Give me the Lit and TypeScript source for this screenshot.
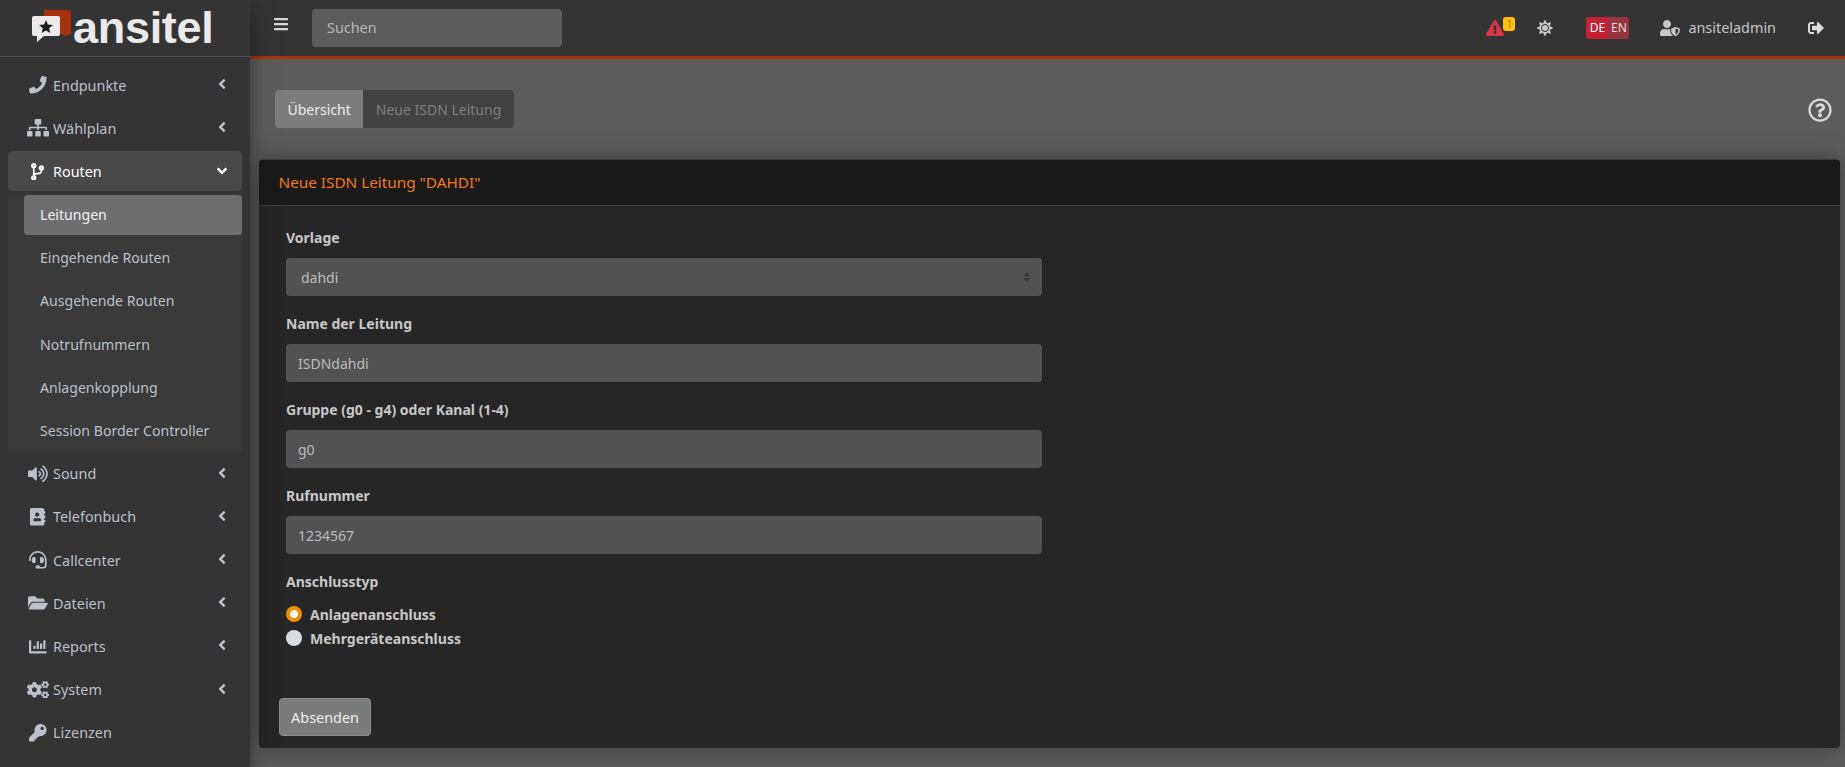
import { LitElement, html, css, svg } from "lit";
import { customElement } from "lit/decorators.js";

const P: Record<string, [number, string]> = {
  phone: [512, "M493.4 24.6l-104-24c-11.3-2.6-22.9 3.3-27.5 13.9l-48 112c-4.2 9.8-1.4 21.3 6.9 28l60.6 49.6c-36 76.7-98.9 140.5-177.2 177.2l-49.6-60.6c-6.8-8.3-18.2-11.1-28-6.9l-112 48C3.9 366.5-2 378.1.6 389.4l24 104C27.1 504.2 36.7 512 48 512c256.1 0 464-207.5 464-464 0-11.2-7.7-20.9-18.6-23.4z"],
  sitemap: [640, "M128 352H32c-17.67 0-32 14.33-32 32v96c0 17.67 14.33 32 32 32h96c17.67 0 32-14.33 32-32v-96c0-17.67-14.33-32-32-32zm-24-80h192v48h48v-48h192v48h48v-57.59c0-21.17-17.23-38.41-38.41-38.41H344v-64h40c17.67 0 32-14.33 32-32V32c0-17.67-14.33-32-32-32H256c-17.67 0-32 14.33-32 32v96c0 17.67 14.33 32 32 32h40v64H94.41C73.23 224 56 241.23 56 262.41V320h48v-48zm264 80h-96c-17.67 0-32 14.33-32 32v96c0 17.67 14.33 32 32 32h96c17.67 0 32-14.33 32-32v-96c0-17.67-14.33-32-32-32zm240 0h-96c-17.67 0-32 14.33-32 32v96c0 17.67 14.33 32 32 32h96c17.67 0 32-14.33 32-32v-96c0-17.67-14.33-32-32-32z"],
  branch: [384, "M384 144c0-44.2-35.8-80-80-80s-80 35.8-80 80c0 36.4 24.3 67.1 57.5 76.8-.6 16.1-4.2 28.5-11 36.9-15.4 19.2-49.3 22.4-85.2 25.7-28.2 2.6-57.4 5.4-81.3 16.9v-144c32.5-10.2 56-40.5 56-76.3 0-44.2-35.8-80-80-80S0 35.8 0 80c0 35.8 23.5 66.1 56 76.3v199.3C23.5 365.9 0 396.2 0 432c0 44.2 35.8 80 80 80s80-35.8 80-80c0-34-21.2-63.1-51.2-74.6 3.1-5.2 7.8-9.8 14.9-13.4 16.2-8.2 40.4-10.4 66.1-12.8 42.2-3.9 90-8.4 118.2-43.4 14-17.4 21.1-39.8 21.6-67.9 31.6-10.8 54.4-40.7 54.4-75.9zM80 64c8.8 0 16 7.2 16 16s-7.2 16-16 16-16-7.2-16-16 7.2-16 16-16zm0 384c-8.8 0-16-7.2-16-16s7.2-16 16-16 16 7.2 16 16-7.2 16-16 16zm224-320c8.8 0 16 7.2 16 16s-7.2 16-16 16-16-7.2-16-16 7.2-16 16-16z"],
  volume: [576, "M215.03 71.05L126.06 160H24c-13.26 0-24 10.74-24 24v144c0 13.25 10.74 24 24 24h102.06l88.97 88.95c15.03 15.03 40.97 4.47 40.97-16.97V88.02c0-21.46-25.96-31.98-40.97-16.97zm233.32-51.08c-11.17-7.33-26.18-4.24-33.51 6.95-7.34 11.17-4.22 26.18 6.95 33.51 66.27 43.49 105.82 116.6 105.82 195.58 0 78.98-39.55 152.09-105.82 195.58-11.17 7.32-14.29 22.34-6.95 33.5 7.04 10.71 21.93 14.56 33.51 6.95C528.27 439.58 576 351.33 576 256S528.27 72.43 448.35 19.97zM480 256c0-63.53-32.06-121.94-85.77-156.24-11.19-7.14-26.03-3.82-33.12 7.46s-3.78 26.21 7.41 33.36C408.27 165.97 432 209.11 432 256s-23.73 90.03-63.48 115.42c-11.19 7.14-14.5 22.07-7.41 33.36 6.51 10.36 21.12 15.14 33.12 7.46C447.94 377.94 480 319.54 480 256zm-141.77-76.87c-11.58-6.33-26.19-2.16-32.61 9.45-6.39 11.61-2.16 26.2 9.45 32.61C327.98 228.28 336 241.63 336 256c0 14.38-8.02 27.72-20.92 34.81-11.61 6.41-15.84 21-9.45 32.61 6.43 11.66 21.05 15.8 32.61 9.45 28.23-15.55 45.77-45 45.77-76.88s-17.54-61.32-45.78-76.86z"],
  book: [448, "M436 160c6.6 0 12-5.4 12-12v-40c0-6.6-5.4-12-12-12h-20V48c0-26.5-21.5-48-48-48H48C21.5 0 0 21.5 0 48v416c0 26.5 21.5 48 48 48h320c26.5 0 48-21.5 48-48v-48h20c6.6 0 12-5.4 12-12v-40c0-6.6-5.4-12-12-12h-20v-64h20c6.6 0 12-5.4 12-12v-40c0-6.6-5.4-12-12-12h-20v-64h20zm-228-32c35.3 0 64 28.7 64 64s-28.7 64-64 64-64-28.7-64-64 28.7-64 64-64zm112 236.8c0 10.6-10 19.2-22.4 19.2H118.4C106 384 96 375.4 96 364.8v-19.2c0-31.8 30.1-57.6 67.2-57.6h5c12.3 5.1 25.7 8 39.8 8s27.6-2.9 39.8-8h5c37.1 0 67.2 25.8 67.2 57.6v19.2z"],
  headset: [512, "M192 208c0-17.67-14.33-32-32-32h-16c-35.35 0-64 28.65-64 64v48c0 35.35 28.65 64 64 64h16c17.67 0 32-14.33 32-32V208zm176 144c35.35 0 64-28.65 64-64v-48c0-35.35-28.65-64-64-64h-16c-17.67 0-32 14.33-32 32v112c0 17.67 14.33 32 32 32h16zM256 0C113.18 0 4.58 118.83 0 256v16c0 8.84 7.16 16 16 16h16c8.84 0 16-7.16 16-16v-16c0-114.69 93.31-208 208-208s208 93.31 208 208h-.12c.08 2.43.12 165.72.12 165.72 0 23.35-18.93 42.28-42.28 42.28H320c0-26.51-21.49-48-48-48h-32c-26.51 0-48 21.49-48 48s21.49 48 48 48h181.72c49.86 0 90.28-40.42 90.28-90.28V256C507.42 118.83 398.82 0 256 0z"],
  folder: [576, "M572.694 292.093L500.27 416.248A63.997 63.997 0 0 1 444.989 448H45.025c-18.523 0-30.064-20.093-20.731-36.093l72.424-124.155A64 64 0 0 1 152 256h399.964c18.523 0 30.064 20.093 20.73 36.093zM152 224h328v-48c0-26.51-21.49-48-48-48H272l-64-64H48C21.49 64 0 85.49 0 112v278.046l69.077-118.418C86.214 242.25 117.989 224 152 224z"],
  chart: [512, "M332.8 320h38.4c6.4 0 12.8-6.4 12.8-12.8V172.8c0-6.4-6.4-12.8-12.8-12.8h-38.4c-6.4 0-12.8 6.4-12.8 12.8v134.4c0 6.4 6.4 12.8 12.8 12.8zm96 0h38.4c6.4 0 12.8-6.4 12.8-12.8V76.8c0-6.4-6.4-12.8-12.8-12.8h-38.4c-6.4 0-12.8 6.4-12.8 12.8v230.4c0 6.4 6.4 12.8 12.8 12.8zm-288 0h38.4c6.4 0 12.8-6.4 12.8-12.8v-70.4c0-6.4-6.4-12.8-12.8-12.8h-38.4c-6.4 0-12.8 6.4-12.8 12.8v70.4c0 6.4 6.4 12.8 12.8 12.8zm96 0h38.4c6.4 0 12.8-6.4 12.8-12.8V108.8c0-6.4-6.4-12.8-12.8-12.8h-38.4c-6.4 0-12.8 6.4-12.8 12.8v198.4c0 6.4 6.4 12.8 12.8 12.8zM496 384H64V80c0-8.84-7.16-16-16-16H16C7.16 64 0 71.16 0 80v336c0 17.67 14.33 32 32 32h464c8.84 0 16-7.16 16-16v-32c0-8.84-7.16-16-16-16z"],
  cogs: [640, "M512.1 191l-8.2 14.3c-3 5.3-9.4 7.5-15.1 5.4-11.8-4.4-22.6-10.7-32.1-18.6-4.6-3.8-5.8-10.5-2.8-15.7l8.2-14.3c-6.9-8-12.3-17.3-15.9-27.4h-16.5c-6 0-11.2-4.3-12.2-10.3-2-12-2.1-24.6 0-37.1 1-6 6.2-10.4 12.2-10.4h16.5c3.6-10.1 9-19.4 15.9-27.4l-8.2-14.3c-3-5.2-1.9-11.9 2.8-15.7 9.5-7.9 20.4-14.2 32.1-18.6 5.7-2.1 12.1.1 15.1 5.4l8.2 14.3c10.5-1.9 21.2-1.9 31.7 0L552 6.3c3-5.3 9.4-7.5 15.1-5.4 11.8 4.4 22.6 10.7 32.1 18.6 4.6 3.8 5.8 10.5 2.8 15.7l-8.2 14.3c6.9 8 12.3 17.3 15.9 27.4h16.5c6 0 11.2 4.3 12.2 10.3 2 12 2.1 24.6 0 37.1-1 6-6.2 10.4-12.2 10.4h-16.5c-3.6 10.1-9 19.4-15.9 27.4l8.2 14.3c3 5.2 1.9 11.9-2.8 15.7-9.5 7.9-20.4 14.2-32.1 18.6-5.7 2.1-12.1-.1-15.1-5.4l-8.2-14.3c-10.4 1.9-21.2 1.9-31.7 0zm-10.5-58.8c38.5 29.6 82.4-14.3 52.8-52.8-38.5-29.7-82.4 14.3-52.8 52.8zM386.3 286.1l33.7 16.8c10.1 5.8 14.5 18.1 10.5 29.1-8.9 24.2-26.4 46.4-42.6 65.8-7.4 8.9-20.2 11.1-30.3 5.3l-29.1-16.8c-16 13.7-34.6 24.6-54.9 31.7v33.6c0 11.6-8.3 21.6-19.7 23.6-24.6 4.2-50.4 4.4-75.9 0-11.5-2-20-11.9-20-23.6V418c-20.3-7.2-38.9-18-54.9-31.7L74 403c-10 5.8-22.9 3.6-30.3-5.3-16.2-19.4-33.3-41.6-42.2-65.7-4-10.9.4-23.2 10.5-29.1l33.3-16.8c-3.9-20.9-3.9-42.4 0-63.4L12 205.8c-10.1-5.8-14.6-18.1-10.5-29 8.9-24.2 26-46.4 42.2-65.8 7.4-8.9 20.2-11.1 30.3-5.3l29.1 16.8c16-13.7 34.6-24.6 54.9-31.7V57.1c0-11.5 8.2-21.5 19.6-23.5 24.6-4.2 50.5-4.4 76-.1 11.5 2 20 11.9 20 23.6v33.6c20.3 7.2 38.9 18 54.9 31.7l29.1-16.8c10-5.8 22.9-3.6 30.3 5.3 16.2 19.4 33.2 41.6 42.1 65.8 4 10.9.1 23.2-10 29.1l-33.7 16.8c3.9 21 3.9 42.5 0 63.5zm-117.6 21.1c59.2-77-28.7-164.9-105.7-105.7-59.2 77 28.7 164.9 105.7 105.7zm243.4 182.7l-8.2 14.3c-3 5.3-9.4 7.5-15.1 5.4-11.8-4.4-22.6-10.7-32.1-18.6-4.6-3.8-5.8-10.5-2.8-15.7l8.2-14.3c-6.9-8-12.3-17.3-15.9-27.4h-16.5c-6 0-11.2-4.3-12.2-10.3-2-12-2.1-24.6 0-37.1 1-6 6.2-10.4 12.2-10.4h16.5c3.6-10.1 9-19.4 15.9-27.4l-8.2-14.3c-3-5.2-1.9-11.9 2.8-15.7 9.5-7.9 20.4-14.2 32.1-18.6 5.7-2.1 12.1.1 15.1 5.4l8.2 14.3c10.5-1.9 21.2-1.9 31.7 0l8.2-14.3c3-5.3 9.4-7.5 15.1-5.4 11.8 4.4 22.6 10.7 32.1 18.6 4.6 3.8 5.8 10.5 2.8 15.7l-8.2 14.3c6.9 8 12.3 17.3 15.9 27.4h16.5c6 0 11.2 4.3 12.2 10.3 2 12 2.1 24.6 0 37.1-1 6-6.2 10.4-12.2 10.4h-16.5c-3.6 10.1-9 19.4-15.9 27.4l8.2 14.3c3 5.2 1.9 11.9-2.8 15.7-9.5 7.9-20.4 14.2-32.1 18.6-5.7 2.1-12.1-.1-15.1-5.4l-8.2-14.3c-10.4 1.9-21.2 1.9-31.7 0zM501.6 431c38.5 29.6 82.4-14.3 52.8-52.8-38.5-29.6-82.4 14.3-52.8 52.8z"],
  key: [512, "M512 176.001C512 273.203 433.202 352 336 352c-11.22 0-22.19-1.062-32.827-3.069l-24.012 27.014A23.999 23.999 0 0 1 261.223 384H224v40c0 13.255-10.745 24-24 24h-40v40c0 13.255-10.745 24-24 24H24c-13.255 0-24-10.745-24-24v-78.059c0-6.365 2.529-12.47 7.029-16.971l161.802-161.802C163.108 213.814 160 195.271 160 176 160 78.798 238.797.001 335.999 0 433.488-.001 512 78.511 512 176.001zM336 128c0 26.51 21.49 48 48 48s48-21.49 48-48-21.49-48-48-48-48 21.49-48 48z"],
  left: [256, "M31.7 239l136-136c9.4-9.4 24.6-9.4 33.9 0l22.6 22.6c9.4 9.4 9.4 24.6 0 33.9L127.9 256l96.4 96.4c9.4 9.4 9.4 24.6 0 33.9L201.7 409c-9.4 9.4-24.6 9.4-33.9 0l-136-136c-9.5-9.4-9.5-24.6-.1-34z"],
  bars: [448, "M16 132h416c8.837 0 16-7.163 16-16V76c0-8.837-7.163-16-16-16H16C7.163 60 0 67.163 0 76v40c0 8.837 7.163 16 16 16zm0 160h416c8.837 0 16-7.163 16-16v-40c0-8.837-7.163-16-16-16H16c-8.837 0-16 7.163-16 16v40c0 8.837 7.163 16 16 16zm0 160h416c8.837 0 16-7.163 16-16v-40c0-8.837-7.163-16-16-16H16c-8.837 0-16 7.163-16 16v40c0 8.837 7.163 16 16 16z"],
  warn: [576, "M569.517 440.013C587.975 472.007 564.806 512 527.94 512H48.054c-36.937 0-59.999-40.055-41.577-71.987L246.423 24c18.467-32.009 64.72-31.951 83.154 0l239.94 416.013zM288 354c-25.405 0-46 20.595-46 46s20.595 46 46 46 46-20.595 46-46-20.595-46-46-46zm-43.673-165.346l7.418 136c.347 6.364 5.609 11.346 11.982 11.346h48.546c6.373 0 11.635-4.982 11.982-11.346l7.418-136c.375-6.874-5.098-12.654-11.982-12.654h-63.383c-6.884 0-12.356 5.78-11.981 12.654z"],
  sun: [512, "M256 160c-52.9 0-96 43.1-96 96s43.1 96 96 96 96-43.1 96-96-43.1-96-96-96zm246.4 80.5l-94.7-47.3 33.5-100.4c4.5-13.6-8.4-26.5-21.9-21.9l-100.4 33.5-47.4-94.8c-6.4-12.8-24.6-12.8-31 0l-47.3 94.7L92.7 70.8c-13.6-4.5-26.5 8.4-21.9 21.9l33.5 100.4-94.7 47.4c-12.8 6.4-12.8 24.6 0 31l94.7 47.3-33.5 100.5c-4.5 13.6 8.4 26.5 21.9 21.9l100.4-33.5 47.3 94.7c6.4 12.8 24.6 12.8 31 0l47.3-94.7 100.4 33.5c13.6 4.5 26.5-8.4 21.9-21.9l-33.5-100.4 94.7-47.3c13-6.5 13-24.7.2-31.1zm-155.9 106c-49.9 49.9-131.1 49.9-181 0-49.9-49.9-49.9-131.1 0-181 49.9-49.9 131.1-49.9 181 0 49.9 49.9 49.9 131.1 0 181z"],
  shield: [640, "M622.3 271.1l-115.2-45c-4.1-1.6-12.6-3.7-22.2 0l-115.2 45c-10.7 4.2-17.7 14-17.7 24.9 0 111.6 68.7 188.8 132.9 213.9 9.6 3.7 18 1.6 22.2 0C558.4 489.9 640 420.5 640 296c0-10.9-7-20.7-17.7-24.9zM496 462.4V273.3l95.5 37.3c-5.6 87.1-60.9 135.4-95.5 151.8zM224 256c70.7 0 128-57.3 128-128S294.7 0 224 0 96 57.3 96 128s57.3 128 128 128zm96 40c0-2.5.8-4.8 1.1-7.2-2.5-.1-4.9-.8-7.5-.8h-16.7c-22.2 10.2-46.9 16-72.9 16s-50.6-5.8-72.9-16h-16.7C60.2 288 0 348.2 0 422.4V464c0 26.5 21.5 48 48 48h352c6.8 0 13.3-1.5 19.1-4-54-42.9-99.1-116.7-99.1-212z"],
  out: [512, "M497 273L329 441c-15 15-41 4.5-41-17v-96H152c-13.3 0-24-10.7-24-24v-96c0-13.3 10.7-24 24-24h136V88c0-21.4 25.9-32 41-17l168 168c9.3 9.4 9.3 24.6 0 34zM192 436v-40c0-6.6-5.4-12-12-12H96c-17.7 0-32-14.3-32-32V160c0-17.7 14.3-32 32-32h84c6.6 0 12-5.4 12-12V76c0-6.6-5.4-12-12-12H96c-53 0-96 43-96 96v192c0 53 43 96 96 96h84c6.6 0 12-5.4 12-12z"],
  help: [512, "M256 8C119.043 8 8 119.083 8 256c0 136.997 111.043 248 248 248s248-111.003 248-248C504 119.083 392.957 8 256 8zm0 448c-110.532 0-200-89.431-200-200 0-110.495 89.472-200 200-200 110.491 0 200 89.471 200 200 0 110.53-89.431 200-200 200zm107.244-255.2c0 67.052-72.421 68.084-72.421 92.863V300c0 6.627-5.373 12-12 12h-45.647c-6.627 0-12-5.373-12-12v-8.659c0-35.745 27.1-50.034 47.579-61.516 17.561-9.845 28.324-16.541 28.324-29.579 0-17.246-21.999-28.693-39.784-28.693-23.189 0-33.894 10.977-48.942 29.969-4.057 5.12-11.46 6.071-16.666 2.124l-27.824-21.098c-5.107-3.872-6.251-11.066-2.644-16.363C184.846 131.491 214.94 112 261.794 112c49.071 0 101.45 38.304 101.45 88.8zM298 368c0 23.159-18.841 42-42 42s-42-18.841-42-42 18.841-42 42-42 42 18.841 42 42z"],
};

function icon(name: string, h: number, cls = "") {
  const [w, d] = P[name];
  return svg`<svg class=${cls} viewBox="0 0 ${w} 512" width=${(w * h) / 512} height=${h} fill="currentColor"><path d=${d}></path></svg>`;
}

const menu = [
  ["phone", "Endpunkte", 1], ["sitemap", "Wählplan", 1], ["branch", "Routen", 2],
];
const rest = [
  ["volume", "Sound", 1], ["book", "Telefonbuch", 1], ["headset", "Callcenter", 1],
  ["folder", "Dateien", 1], ["chart", "Reports", 1], ["cogs", "System", 1], ["key", "Lizenzen", 0],
];
const subs = ["Leitungen", "Eingehende Routen", "Ausgehende Routen", "Notrufnummern", "Anlagenkopplung", "Session Border Controller"];

@customElement("app-root")
export class AppRoot extends LitElement {
  static styles = css`
    :host { display: block; height: 100vh; overflow: hidden; font-family: "Noto Sans", sans-serif; font-size: 14.4px; color: #ccc; }
    * { box-sizing: border-box; }
    .layout { display: flex; height: 767px; background: #5c5c5c; }
    .side { width: 250px; flex: none; background: #343434; box-shadow: 0 14px 28px rgba(0,0,0,.25), 0 10px 10px rgba(0,0,0,.22); position: relative; z-index: 2; }
    .brand { height: 57px; border-bottom: 1px solid #4b545c; display: flex; align-items: flex-start; padding-left: 32px; }
    .logo { width: 40px; height: 34px; margin-top: 10px; flex: none; }
    .brandtext { font-family: "Liberation Sans", sans-serif; font-weight: 700; font-size: 45px; line-height: 52px; color: #eaeaea; margin: 2px 0 0 1px; letter-spacing: -.3px; }
    nav { padding: 8px; display: flex; flex-direction: column; gap: 3.2px; }
    .item { height: 40px; display: flex; align-items: center; padding: 0 16px 0 0; border-radius: 4px; color: #bcc1ca; }
    .item.open { background: #494949; color: #fff; }
    .ic { width: 45px; padding-left: 15px; display: flex; justify-content: center; flex: none; }
    .ic svg { display: block; }
    .lbl { flex: 1; }
    .arr { display: block; margin-top: -2px; }
    .arr.down { transform: rotate(-90deg); margin-top: 0; }
    .sub { background: #3a3a3a; padding-left: 16px; display: flex; flex-direction: column; gap: 3.2px; font-size: 14.1px; }
    .sitem { height: 40px; display: flex; align-items: center; padding-left: 16px; border-radius: 4px; color: #bcc1ca; }
    .sitem.active { background: #6e6e6e; color: #f2f2f2; }
    .main { flex: 1; min-width: 0; display: flex; flex-direction: column; }
    .top { height: 59px; flex: none; background: #343434; border-bottom: 3px solid #a8320e; display: flex; align-items: center; padding-bottom: 1px; color: #c8c8c8; }
    .bars { margin-left: 24px; margin-right: 24px; color: #d8d8d8; display: block; margin-top: -8px; }
    .search { width: 250px; height: 38px; background: #5c5c5c; border-radius: 4px; padding-left: 15px; display: flex; align-items: center; color: #b8b8b8; }
    .right { margin-left: auto; display: flex; align-items: center; }
    .warn { color: #dc3545; display: block; }
    .bell { position: relative; display: block; margin-right: 33px; }
    .badge { position: absolute; left: 17px; top: -3px; width: 12px; height: 14px; background: #ffc107; border-radius: 3px; color: #9a7a10; font-size: 10px; line-height: 14px; text-align: center; }
    .lang { display: flex; height: 22px; border-radius: 3px; overflow: hidden; font-size: 12px; line-height: 22px; margin: 0 31px 0 33px; }
    .lang b { font-weight: 400; width: 22px; text-align: center; background: #c52033; color: #fff; }
    .lang i { font-style: normal; width: 21px; text-align: center; background: #98343f; color: #ddd; }
    .user { margin-right: 8px; display: block; }
    .uname { margin-right: 32px; }
    .out { margin-right: 21px; display: block; color: #ddd; }
    .content { flex: 1; padding: 31px 5px 0 9px; min-height: 0; }
    .tabrow { display: flex; align-items: center; justify-content: space-between; padding: 0 8px 0 16px; margin-bottom: 31px; }
    .tabs { display: flex; height: 38px; border-radius: 4px; overflow: hidden; font-size: 14px; }
    .tab { padding: 1px 12.5px 0; line-height: 38px; }
    .tab.on { background: #7d7d7d; color: #eee; }
    .tab.off { background: #424242; color: #7f7f7f; }
    .help { color: #dcdcdc; display: block; margin-top: 2px; }
    .card { height: 589px; background: #262626; border-radius: 4px; box-shadow: 0 0 24px rgba(0,0,0,.35); overflow: hidden; display: flex; flex-direction: column; border-top: 1px solid #3c3c3c; }
    .chead { height: 46px; background: #1a1a1a; border-bottom: 1px solid #3c3c3c; padding: 0 0 2px 19.5px; display: flex; align-items: center; color: #f57c0c; font-size: 15.3px; flex: none; }
    .cbody { padding: 20px 27px 0; width: 810px; flex: 1; }
    .group { margin-bottom: 16px; }
    label { display: block; font-weight: 700; line-height: 24px; margin-bottom: 8px; color: #c8c8c8; font-size: 14px; }
    .ctl { display: block; width: 756px; height: 38px; border: 0; border-radius: 4px; background: #525252; color: #bcbcbc; padding: 0 12px; font: inherit; font-size: 14px; outline: none; }
    .selwrap { position: relative; }
    select.ctl { appearance: none; padding-left: 15px; }
    .updown { position: absolute; right: 11px; top: 14px; }
    .radio { display: flex; align-items: center; height: 24px; font-weight: 700; color: #c8c8c8; font-size: 14px; }
    .dot { width: 16px; height: 16px; border-radius: 50%; background: #d8dce2; margin-right: 8px; flex: none; }
    .dot.on { background: radial-gradient(circle, #fff 0 3.6px, #f58d00 4.4px); }
    .cfoot { padding: 12px 20px; flex: none; }
    .btn { display: block; width: 92px; height: 38px; border: 1px solid #8e8e8e; background: #7b7b7b; color: #eee; border-radius: 4px; font: inherit; }
  `;

  private row(m: any[]) {
    const open = m[2] === 2;
    return html`<div class="item ${open ? "open" : ""}">
      <span class="ic">${icon(m[0], 17.6)}</span><span class="lbl">${m[1]}</span>
      ${m[2] ? icon("left", 16, open ? "arr down" : "arr") : ""}
    </div>`;
  }

  render() {
    return html`<div class="layout">
      <aside class="side">
        <div class="brand">
          <svg class="logo" viewBox="0 0 40 34">
            <path d="M12 0h25a2 2 0 0 1 2 2v21a2 2 0 0 1-2 2l-2 0-1 1.5-3-1.5V24H12z" fill="#a8320e"/>
            <path d="M2 6h24a2 2 0 0 1 2 2v16a2 2 0 0 1-2 2H12l-7 6 0-6H2a2 2 0 0 1-2-2V8a2 2 0 0 1 2-2z" fill="#eaeaea"/>
            <path d="M14 10l1.9 4.6 5 .4-3.8 3.2 1.2 4.8L14 20.4 9.7 23l1.2-4.8L7.1 15l5-.4z" fill="#1c1c1c"/>
          </svg>
          <span class="brandtext">ansitel</span>
        </div>
        <nav>
          ${menu.map((m) => this.row(m))}
          <div class="sub">
            ${subs.map((s, i) => html`<div class="sitem ${i === 0 ? "active" : ""}">${s}</div>`)}
          </div>
          ${rest.map((m) => this.row(m))}
        </nav>
      </aside>
      <div class="main">
        <header class="top">
          ${icon("bars", 16, "bars")}
          <div class="search">Suchen</div>
          <div class="right">
            <span class="bell">${icon("warn", 16, "warn")}<span class="badge">1</span></span>
            ${icon("sun", 16)}
            <div class="lang"><b>DE</b><i>EN</i></div>
            ${icon("shield", 16, "user")}
            <span class="uname">ansiteladmin</span>
            ${icon("out", 16, "out")}
          </div>
        </header>
        <div class="content">
          <div class="tabrow">
            <div class="tabs"><div class="tab on">Übersicht</div><div class="tab off">Neue ISDN Leitung</div></div>
            ${icon("help", 24, "help")}
          </div>
          <section class="card">
            <div class="chead">Neue ISDN Leitung "DAHDI"</div>
            <div class="cbody">
              <div class="group">
                <label>Vorlage</label>
                <div class="selwrap">
                  <select class="ctl"><option>dahdi</option></select>
                  <svg class="updown" width="8" height="10" viewBox="0 0 8 10" fill="#343a40"><path d="M4 0L7.5 4H.5zM4 10L.5 6h7z"/></svg>
                </div>
              </div>
              <div class="group"><label>Name der Leitung</label><input class="ctl" .value=${"ISDNdahdi"} /></div>
              <div class="group"><label>Gruppe (g0 - g4) oder Kanal (1-4)</label><input class="ctl" .value=${"g0"} /></div>
              <div class="group"><label>Rufnummer</label><input class="ctl" .value=${"1234567"} /></div>
              <div class="group">
                <label>Anschlusstyp</label>
                <div class="radio"><span class="dot on"></span>Anlagenanschluss</div>
                <div class="radio"><span class="dot"></span>Mehrgeräteanschluss</div>
              </div>
            </div>
            <div class="cfoot"><button class="btn">Absenden</button></div>
          </section>
        </div>
      </div>
    </div>`;
  }
}
